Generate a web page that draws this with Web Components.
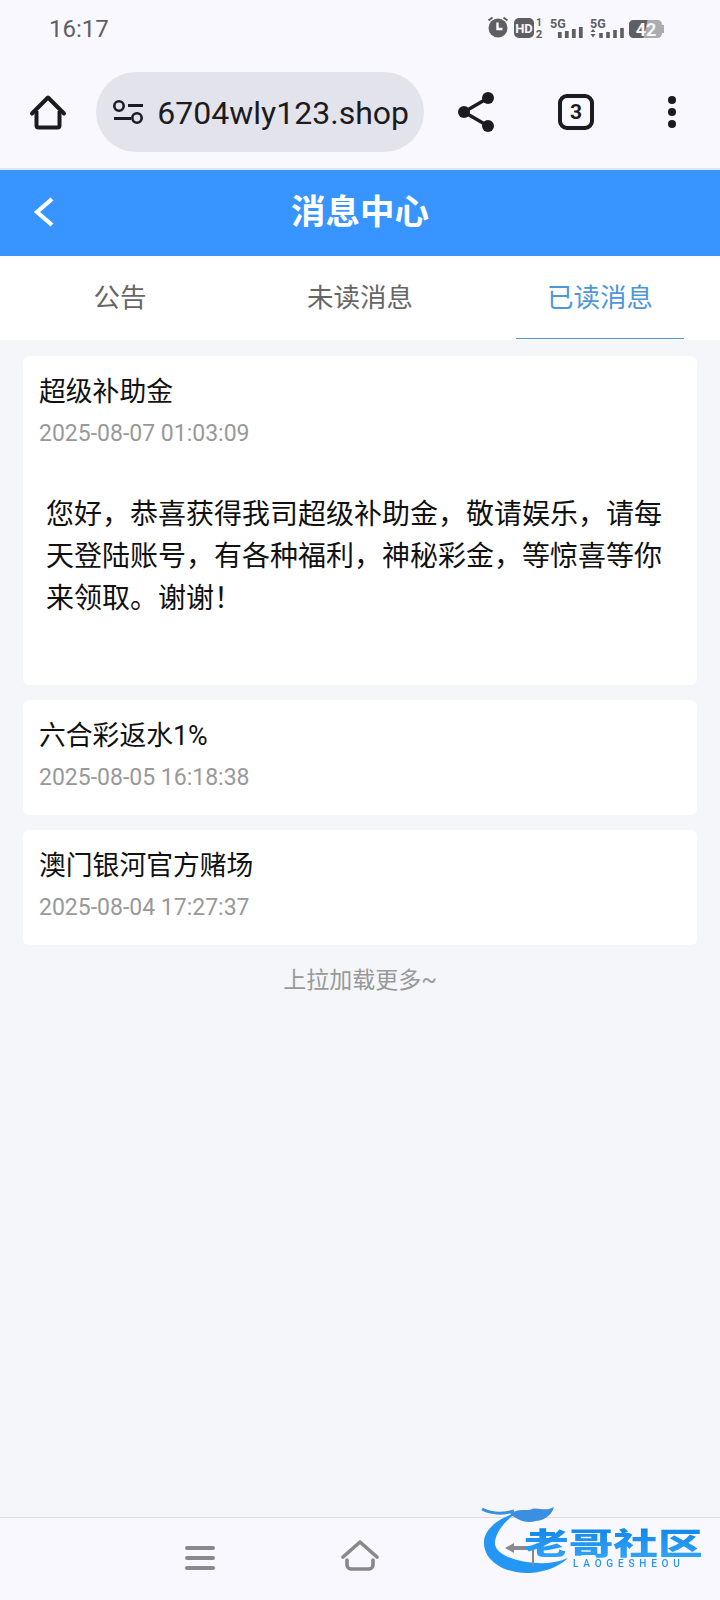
<!DOCTYPE html>
<html lang="zh">
<head>
<meta charset="utf-8">
<title>消息中心</title>
<style>
  html, body { margin: 0; padding: 0; background: #f4f6f9; }
  body { font-family: Roboto, "Noto Sans CJK SC", sans-serif; }
  app-page { height: 1600px; }
</style>
</head>
<body>
<app-page>
  <status-bar></status-bar>
  <browser-bar url="6704wly123.shop" tabs="3"></browser-bar>
  <title-bar>消息中心</title-bar>
  <tab-row></tab-row>
  <message-list>
    <message-card heading="超级补助金" time="2025-08-07 01:03:09" open>您好，恭喜获得我司超级补助金，敬请娱乐，请每天登陆账号，有各种福利，神秘彩金，等惊喜等你来领取。谢谢！</message-card>
    <message-card heading="六合彩返水1%" time="2025-08-05 16:18:38"></message-card>
    <message-card heading="澳门银河官方赌场" time="2025-08-04 17:27:37"></message-card>
    <load-more>上拉加载更多~</load-more>
  </message-list>
  <nav-bar></nav-bar>
</app-page>

<script>
const CJK = 'Roboto, "Noto Sans CJK SC", sans-serif';

function define(name, css, html, setup) {
  customElements.define(name, class extends HTMLElement {
    constructor() {
      super();
      this.attachShadow({ mode: "open" }).innerHTML = `<style>${css}</style>${html}`;
    }
    connectedCallback() {
      if (setup) setup.call(this, this.shadowRoot);
    }
  });
}

define("app-page", `
  :host { display: flex; flex-direction: column; width: 720px; overflow: hidden; position: relative; }
`, `<slot></slot>`);

define("status-bar", `
  :host { display: flex; align-items: center; justify-content: space-between; height: 56px; background: #f8f8fe; padding: 1px 55px 0 49px; box-sizing: border-box; font: 400 24px ${CJK}; color: #5f5f63; }
  svg { display: block; margin-top: 3px; }
  text { font-family: Roboto, sans-serif; font-weight: 700; }
`, `
  <span>16:17</span>
  <svg width="178" height="32" viewBox="0 0 178 32">
    <circle cx="11" cy="14" r="9.500" fill="#5f5f63"/>
    <path d="M10.500 8.500v6.500h5" fill="none" stroke="#f8f8fe" stroke-width="2.400"/>
    <path d="M1.500 6.500l4-3M16.500 3.500l4 3" stroke="#5f5f63" stroke-width="2"/>
    <rect x="27" y="4" width="20" height="20" rx="5" fill="#5f5f63"/>
    <text x="37" y="19" font-size="13" text-anchor="middle" fill="#f8f8fe">HD</text>
    <text x="52" y="12" font-size="10.500" text-anchor="middle" fill="#5f5f63">1</text>
    <text x="52" y="24" font-size="11.500" text-anchor="middle" fill="#5f5f63">2</text>
    <text x="63" y="14" font-size="12.500" fill="#5f5f63">5G</text>
    <path d="M72.800 24v-6M79.800 24v-7M86.800 24v-9M93.800 24v-11" stroke="#5f5f63" stroke-width="3.800"/>
    <text x="103" y="14" font-size="12.500" fill="#5f5f63">5G</text>
    <path d="M103.500 18l2.500-3 2.500 3zM103.500 20l2.500 3.500 2.500-3.500z" fill="#5f5f63"/>
    <path d="M114 24v-5M121 24v-6M128 24v-8M135 24v-10" stroke="#5f5f63" stroke-width="3.600"/>
    <rect x="142" y="6" width="33" height="18" rx="4.500" fill="#acacae"/>
    <rect x="175" y="11" width="2" height="8" fill="#acacae"/>
    <path d="M146.500 6h14l-4 18h-10a4.500 4.500 0 0 1-4.500-4.500v-9a4.500 4.500 0 0 1 4.500-4.500z" fill="#5f5f63"/>
    <text x="159" y="21.500" font-size="18" text-anchor="middle" fill="#f8f8fe">42</text>
  </svg>
`);

define("browser-bar", `
  :host { display: flex; align-items: center; height: 114px; background: #f8f8fe; box-sizing: border-box; position: relative; border-bottom: 2px solid #dfe5ee; }
  .slot { flex: none; display: flex; align-items: center; justify-content: center; }
  .home { width: 96px; }
  .addr { width: 328px; height: 80px; border-radius: 40px; background: #e3e3ec; box-sizing: border-box; padding: 0 15px 0 17px; display: flex; align-items: center; gap: 16px; }
  .url { flex: 1; min-width: 0; display: flex; justify-content: flex-end; overflow: hidden; padding-top: 2px; font: 400 32px/44px Roboto, sans-serif; color: #1b1b20; white-space: nowrap; }
  .url span { flex: none; }
  .share { width: 104px; }
  .tabs { width: 96px; }
  .more { width: 96px; }
  .count { width: 36px; height: 36px; box-sizing: border-box; border: 4px solid #1b1b20; border-radius: 9px; display: flex; align-items: center; justify-content: center; font: 700 21px Roboto, sans-serif; color: #1b1b20; }
  svg { display: block; flex: none; }
`, `
  <div class="slot home">
    <svg width="38" height="38" viewBox="0 0 38 38"><path d="M3 20.500 19 4.500l16 16" fill="none" stroke="#1b1b20" stroke-width="4" stroke-linecap="round" stroke-linejoin="round"/><path d="M7.500 18v14.500a2 2 0 0 0 2 2h19a2 2 0 0 0 2-2V18" fill="none" stroke="#1b1b20" stroke-width="4" stroke-linejoin="round"/></svg>
  </div>
  <div class="addr">
    <svg width="30" height="24" viewBox="0 0 30 24"><circle cx="6" cy="6" r="4.700" fill="none" stroke="#1b1b20" stroke-width="2.600"/><path d="M15 5.500h15M1 18.500h17" stroke="#1b1b20" stroke-width="2.800"/><circle cx="24" cy="18" r="4.700" fill="none" stroke="#1b1b20" stroke-width="2.600"/></svg>
    <div class="url"><span></span></div>
  </div>
  <div class="slot share">
    <svg width="38" height="40" viewBox="0 0 38 40"><path d="M31 6 7 20l24 14" fill="none" stroke="#1b1b20" stroke-width="3.400"/><circle cx="31" cy="6" r="6" fill="#1b1b20"/><circle cx="7" cy="20" r="6" fill="#1b1b20"/><circle cx="31" cy="34" r="6" fill="#1b1b20"/></svg>
  </div>
  <div class="slot tabs"><div class="count"></div></div>
  <div class="slot more">
    <svg width="10" height="34" viewBox="0 0 10 34"><circle cx="5" cy="5" r="4" fill="#1b1b20"/><circle cx="5" cy="17" r="4" fill="#1b1b20"/><circle cx="5" cy="29" r="4" fill="#1b1b20"/></svg>
  </div>
`, function (root) {
  root.querySelector(".url span").textContent = this.getAttribute("url");
  root.querySelector(".count").textContent = this.getAttribute("tabs");
});

define("title-bar", `
  :host { display: flex; align-items: center; justify-content: center; height: 86px; padding-bottom: 8px; box-sizing: border-box; background: #3894ff; position: relative; color: #fff; font: 700 34.500px ${CJK}; }
  svg { position: absolute; left: 31px; top: 26px; }
`, `
  <svg width="24" height="32" viewBox="0 0 24 32"><path d="M21 3 6 16l15 13" fill="none" stroke="#fff" stroke-width="4.200"/></svg>
  <slot></slot>
`);

define("tab-row", `
  :host { display: grid; grid-template-columns: repeat(3, 1fr); height: 84px; background: #fff; font: 400 26.500px ${CJK}; color: #666; }
  div { display: flex; align-items: center; justify-content: center; position: relative; padding-bottom: 6px; box-sizing: border-box; }
  .on { color: #4e96dc; }
  .on::after { content: ""; position: absolute; left: 36px; right: 36px; bottom: 1px; height: 1px; background: #4e96dc; }
`, `
  <div>公告</div>
  <div>未读消息</div>
  <div class="on">已读消息</div>
`);

define("message-list", `
  :host { display: flex; flex-direction: column; gap: 15px; padding: 16px 23px 0; flex: 1; min-height: 0; }
`, `<slot></slot>`);

define("message-card", `
  :host { display: block; background: #fff; border-radius: 6px; }
  .head { padding: 18px 16px 20px; }
  h3 { margin: 0; font: 400 26.800px/36px ${CJK}; color: #111; }
  time { display: block; margin-top: 7px; font: 400 23px/34px Roboto, sans-serif; color: #999; }
  .body { padding: 23px 30px 65px 23px; font: 400 28px/42px ${CJK}; color: #111; }
  :host(:not([open])) .body { display: none; }
`, `
  <div class="head"><h3></h3><time></time></div>
  <div class="body"><slot></slot></div>
`, function (root) {
  root.querySelector("h3").textContent = this.getAttribute("heading");
  root.querySelector("time").textContent = this.getAttribute("time");
});

define("load-more", `
  :host { display: block; text-align: center; font: 400 23px/34px ${CJK}; color: #999; margin-top: 4px; }
`, `<slot></slot>`);

define("nav-bar", `
  :host { display: flex; align-items: center; height: 83px; background: #f8f8fe; border-top: 1px solid #dedee2; position: relative; box-sizing: border-box; }
  svg { display: block; position: absolute; }
  .logo { filter: blur(.5px); }
  .logo-text { font: 900 30px "Noto Sans CJK SC", sans-serif; }
  .logo-small { font: 500 10px Roboto, sans-serif; letter-spacing: 4.800px; fill: #2a95ee; }
`, `
  <svg style="left:185px;top:27px" width="31" height="26" viewBox="0 0 31 26"><path d="M2 3h26M2 13h26M2 23h26" stroke="#88888e" stroke-width="4" stroke-linecap="round"/></svg>
  <svg style="left:340px;top:22px" width="40" height="31" viewBox="0 0 40 31"><path d="M3 17 20 2l17 15" fill="none" stroke="#88888e" stroke-width="3.600" stroke-linecap="round" stroke-linejoin="round"/><path d="M7 20v5a4 4 0 0 0 4 4h18a4 4 0 0 0 4-4v-5" fill="none" stroke="#88888e" stroke-width="3.600" stroke-linecap="round"/></svg>
  <svg class="logo" style="left:480px;top:-18px" width="240" height="80" viewBox="0 0 240 80">
    <defs>
      <linearGradient id="lg" x1="0" y1="0" x2="0" y2="1"><stop offset="0" stop-color="#0b7fe4"/><stop offset="1" stop-color="#34a8fb"/></linearGradient>
    </defs>
    <path d="M36 13C14 20 3 32 4 44 5 62 26 74 50 73 66 72 80 66 88 58 74 64 60 64 46 62 28 59 14 52 15 42 16 32 24 22 36 13z" fill="#2497f4"/>
    <path d="M2 9C14 15 24 14 34 11" fill="none" stroke="#3b8fe0" stroke-width="3"/>
    <path d="M30 14C40 7 46 12 52 9 58 7 66 12 74 7 72 14 66 20 56 21 46 24 38 20 30 14z" fill="#3b8fe0"/>
    <path d="M25 48 34 43v3h20v20h-2V50H34v3z" fill="#88888e"/>
    <text class="logo-text" fill="url(#lg)" transform="translate(44 54) scale(1.49 1)">老哥社区</text>
    <text class="logo-small" x="93" y="67">LAOGESHEOU</text>
  </svg>
`);
</script>
</body>
</html>
